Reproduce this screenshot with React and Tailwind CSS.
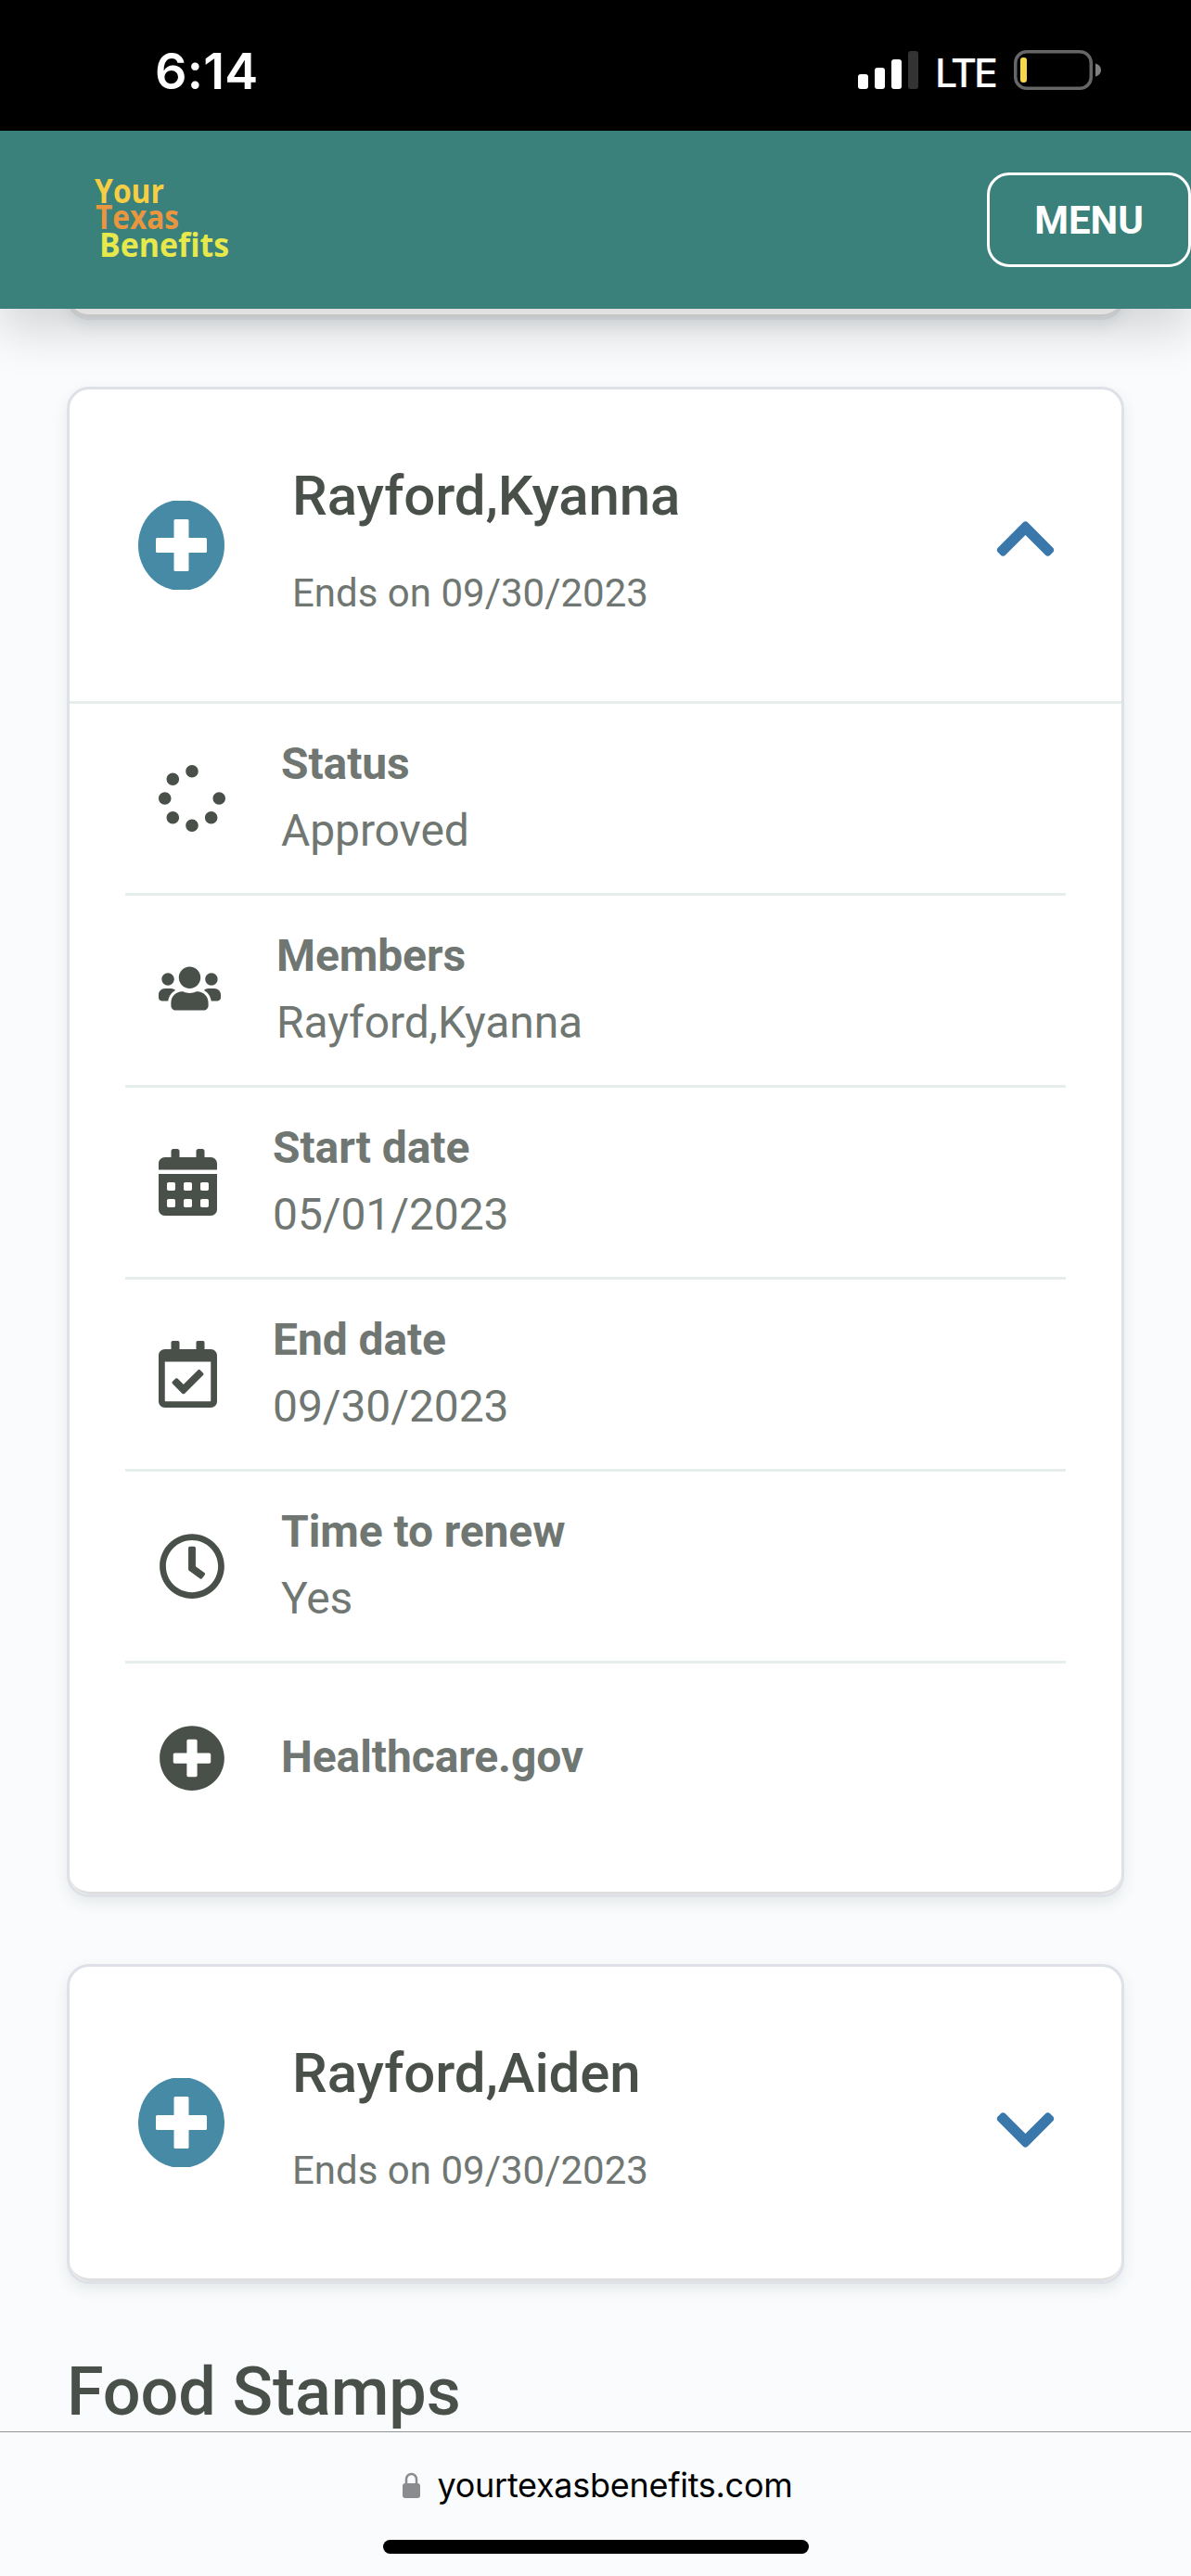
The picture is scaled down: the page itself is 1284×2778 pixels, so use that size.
import React, { useState } from "react";
import {
	FaCalendarAlt,
	FaChevronDown,
	FaChevronUp,
	FaPlusCircle,
	FaRegCalendarCheck,
	FaRegClock,
	FaSpinner,
	FaUsers,
} from "react-icons/fa";

const CASES = [
	{
		name: "Rayford,Kyanna",
		ends: "09/30/2023",
		open: true,
		details: [
			{ icon: <FaSpinner className="w-[72px] h-[72px]" />, label: "Status", value: "Approved" },
			{ icon: <FaUsers className="w-[67px] h-[54px] mb-1" />, label: "Members", value: "Rayford,Kyanna" },
			{ icon: <FaCalendarAlt className="w-[63px] h-[72px]" />, label: "Start date", value: "05/01/2023" },
			{ icon: <FaRegCalendarCheck className="w-[63px] h-[72px]" />, label: "End date", value: "09/30/2023" },
			{ icon: <FaRegClock className="w-[72px] h-[72px]" />, label: "Time to renew", value: "Yes" },
			{ icon: <FaPlusCircle className="w-[72px] h-[72px]" />, label: "Healthcare.gov" },
		],
	},
	{ name: "Rayford,Aiden", ends: "09/30/2023", open: false, details: [] },
];

const StatusBar = () => (
	<div className="h-[141px] shrink-0 bg-black text-white flex items-start justify-between pl-[167px] pr-[97px] font-['Inter',sans-serif]">
		<span className="mt-[45px] text-[54px] leading-[64px] font-semibold tracking-[0.2px]">6:14</span>
		<div className="flex items-start">
			<svg className="mt-[55px] w-[65px] h-[41px]" viewBox="0 0 65 41" fill="#fff">
				<rect x="0" y="25" width="11" height="16" rx="3" />
				<rect x="18" y="18" width="11" height="23" rx="3" />
				<rect x="36" y="9" width="11" height="32" rx="3" />
				<rect x="54" y="0" width="11" height="41" rx="3" fill="#333" />
			</svg>
			<span className="w-[103px] pl-[18px] mt-[52px] text-[43px] leading-[53px] font-medium tracking-[-3.2px]">LTE</span>
			<svg className="mt-[54px] w-[94px] h-[43px]" viewBox="0 0 94 43" fill="none">
				<rect x="1.75" y="1.75" width="81.5" height="39.5" rx="12" stroke="#666" strokeWidth="3.5" />
				<rect x="7" y="8" width="7" height="27" rx="3" fill="#f8d74a" />
				<path d="M88 14.5c3.5 1 6 3.6 6 7s-2.500 6-6 7z" fill="#7f7f7f" />
			</svg>
		</div>
	</div>
);

const Logo = () => (
	<svg
		className="w-[150px] h-[100px] overflow-visible font-['Open_Sans',sans-serif] font-bold text-[36px] [font-variant-ligatures:none]"
		viewBox="0 0 150 100"
	>
		<text x="2" y="32" textLength="75" lengthAdjust="spacingAndGlyphs" fill="#f6ce45">Your</text>
		<text x="3" y="60" textLength="90" lengthAdjust="spacingAndGlyphs" fill="#ea963e">Texas</text>
		<text x="7" y="90" textLength="140" lengthAdjust="spacingAndGlyphs" fill="#e6e84b">Benefits</text>
	</svg>
);

const Header = () => (
	<header className="relative z-10 h-[192px] shrink-0 bg-[#3a817c] shadow-[0_24px_48px_rgba(0,0,0,0.15)] flex items-center justify-between pl-[100px]">
		<Logo />
		<button className="w-[220px] h-[102px] border-3 border-white rounded-[24px] text-white text-[42px] leading-[63px] font-bold">
			MENU
		</button>
	</header>
);

const PlusBadge = () => (
	<svg className="w-[93px] h-[96px] shrink-0" viewBox="0 0 93 96">
		<ellipse cx="46.500" cy="48" rx="46.500" ry="49" fill="#468aa5" />
		<rect x="19" y="40" width="55" height="16" rx="1.500" fill="#fff" />
		<rect x="38.500" y="20" width="16" height="56" rx="1.500" fill="#fff" />
	</svg>
);

const DetailRow = ({ item, last }) => (
	<div className={last ? "h-[246px]" : "h-[207px] border-b-3 border-[#e6eeec]"}>
		<div className="h-[204px] flex items-center gap-[60px] pl-9">
			<span className="text-[#495049]">{item.icon}</span>
			<div className="text-[48px] leading-[72px] tracking-[-0.1px] text-[#707772] pb-[2px]">
				<p className="font-bold">{item.label}</p>
				{item.value && <p>{item.value}</p>}
			</div>
		</div>
	</div>
);

const CaseCard = ({ data }) => {
	const [open, setOpen] = useState(data.open);

	return (
		<article className="bg-white border-3 border-[#dee1e7] rounded-[24px] shadow-[0_6px_16px_rgba(0,50,45,0.09)]">
			<div className="border-b-3 border-[#dfdfdf] rounded-[22px]">
				<div
					className="h-[336px] flex items-start pl-[74px] pr-[72px] cursor-pointer"
					onClick={() => setOpen(!open)}
				>
					<div className="mt-[120px]">
						<PlusBadge />
					</div>
					<div className="ml-[73px] flex-1">
						<h3 className="mt-[70px] text-[60px] leading-[90px] tracking-[-0.1px] font-medium text-[#495049]">{data.name}</h3>
						<p className="mt-[28px] text-[42px] leading-[63px] text-[#707772]">Ends on {data.ends}</p>
					</div>
					{open ? (
						<FaChevronUp className="mt-[125px] w-[63px] h-[72px] text-[#3a77ab]" />
					) : (
						<FaChevronDown className="mt-[140px] w-[63px] h-[72px] text-[#3a77ab]" />
					)}
				</div>

				{/* DETAILS */}
				{open && (
					<div className="border-t-3 border-[#e6eeec] px-[60px]">
						{data.details.map((item, index) => (
							<DetailRow key={item.label} item={item} last={index === data.details.length - 1} />
						))}
					</div>
				)}
			</div>
		</article>
	);
};

const BrowserBar = () => (
	<footer className="h-[156px] shrink-0 bg-[#fafbfd] border-t border-[#929497] flex flex-col items-center">
		<div className="mt-[33px] h-12 flex items-center gap-[19px] pl-[4px] font-['Inter',sans-serif] text-[36px] leading-[48px] tracking-[-0.28px] text-black">
			<svg className="w-[19px] h-[28px]" viewBox="0 0 19 28">
				<path d="M4 13V7.500a5.500 5.500 0 0 1 11 0V13" fill="none" stroke="#8a8b8e" strokeWidth="2.500" />
				<rect x="0" y="12" width="19" height="16" rx="3" fill="#8a8b8e" />
			</svg>
			<span>yourtexasbenefits.com</span>
		</div>
		<div className="mt-[35px] w-[459px] h-[15px] rounded-full bg-black" />
	</footer>
);

export default function App() {
	return (
		<div className="w-full h-[2778px] overflow-hidden flex flex-col bg-[#fafbfd] font-['Roboto',sans-serif]">
			<StatusBar />
			<Header />
			<main className="flex-1 min-h-0 overflow-hidden px-[72px]">
				{/* tail of the card scrolled under the header */}
				<div className="h-[12px] flex flex-col justify-end">
					<div className="h-12 shrink-0 bg-white border-3 border-[#dee1e7] rounded-[24px] shadow-[0_6px_16px_rgba(0,50,45,0.09)]">
						<div className="h-full border-b-3 border-[#dfdfdf] rounded-[22px]" />
					</div>
				</div>
				<div className="mt-[72px] flex flex-col gap-[72px]">
					{CASES.map((data) => (
						<CaseCard key={data.name} data={data} />
					))}
				</div>
				<h2 className="mt-[63px] text-[72px] leading-[108px] tracking-[-0.1px] font-medium text-[#495049]">Food Stamps</h2>
			</main>
			<BrowserBar />
		</div>
	);
}
